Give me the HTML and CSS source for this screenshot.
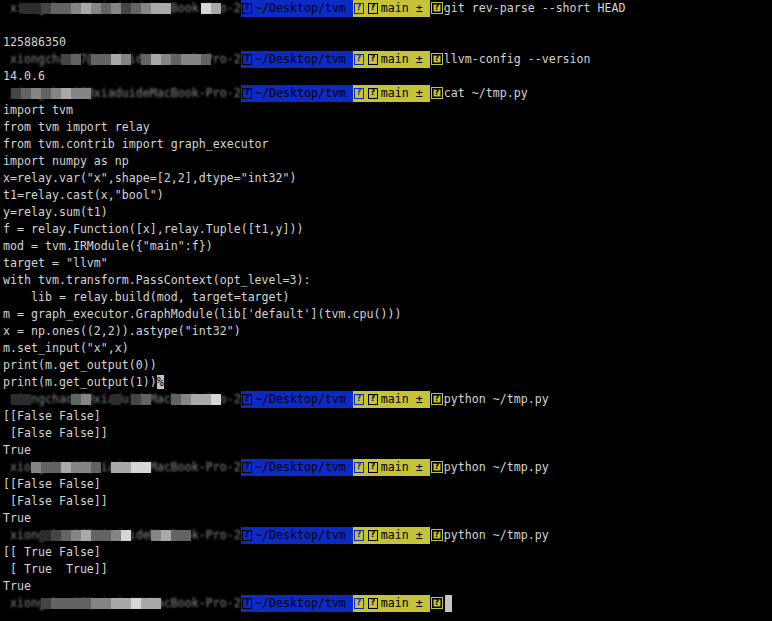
FILE: index.html
```html
<!DOCTYPE html>
<html>
<head>
<meta charset="utf-8">
<link rel="stylesheet" href="styles.css">
</head>
<body>
<div class="term">
  <div class="line"><span class="ctx"><span class="ctx-text"> xiongchao07@xiaduideMacBook-Pro-2</span><span class="m"><i class="s0"></i><i class="s1"></i><i class="s1"></i><i class="s2"></i><i class="s3"></i><i class="s3"></i><i class="s4"></i><i class="s5"></i><i class="s4"></i><i class="s3"></i><i class="s4"></i><i class="s2"></i><i class="s3"></i><i class="s4"></i><i class="s5"></i><i class="s5"></i><i class="s0"></i><i class="s0"></i><i class="s0"></i><i class="s6"></i><i class="s5"></i><i class="s0"></i></span></span><span class="seg dir"><span class="qb"><span class="q">?</span></span>~/Desktop/tvm </span><span class="seg git"><span class="qb qblue"><span class="q">?</span></span><span class="qb"><span class="q">?</span></span>main ± </span><span class="qend"><span class="q">?</span></span><span class="cmd">git rev-parse --short HEAD</span></div>
  <div class="line"></div>
  <div class="line">125886350</div>
  <div class="line"><span class="ctx"><span class="ctx-text"> xiongchao07@xiaduideMacBook-Pro-2</span><span class="m"><i class="s0"></i><i class="s0"></i><i class="s0"></i><i class="s0"></i><i class="s0"></i><i class="s2"></i><i class="s3"></i><i class="s0"></i><i class="s3"></i><i class="s3"></i><i class="s5"></i><i class="s4"></i><i class="s0"></i><i class="s3"></i><i class="s5"></i><i class="s4"></i><i class="s3"></i><i class="s4"></i><i class="s4"></i><i class="s3"></i><i class="s0"></i><i class="s0"></i></span></span><span class="seg dir"><span class="qb"><span class="q">?</span></span>~/Desktop/tvm </span><span class="seg git"><span class="qb qblue"><span class="q">?</span></span><span class="qb"><span class="q">?</span></span>main ± </span><span class="qend"><span class="q">?</span></span><span class="cmd">llvm-config --version</span></div>
  <div class="line">14.0.6</div>
  <div class="line"><span class="ctx"><span class="ctx-text"> xiongchao07@xiaduideMacBook-Pro-2</span><span class="m"><i class="s2"></i><i class="s3"></i><i class="s4"></i><i class="s3"></i><i class="s4"></i><i class="s5"></i><i class="s4"></i><i class="s4"></i><i class="s0"></i><i class="s0"></i><i class="s0"></i><i class="s0"></i><i class="s0"></i><i class="s0"></i><i class="s0"></i><i class="s0"></i><i class="s0"></i><i class="s0"></i><i class="s0"></i><i class="s0"></i><i class="s0"></i><i class="s0"></i></span></span><span class="seg dir"><span class="qb"><span class="q">?</span></span>~/Desktop/tvm </span><span class="seg git"><span class="qb qblue"><span class="q">?</span></span><span class="qb"><span class="q">?</span></span>main ± </span><span class="qend"><span class="q">?</span></span><span class="cmd">cat ~/tmp.py</span></div>
  <div class="line">import tvm</div>
  <div class="line">from tvm import relay</div>
  <div class="line">from tvm.contrib import graph_executor</div>
  <div class="line">import numpy as np</div>
  <div class="line">x=relay.var("x",shape=[2,2],dtype="int32")</div>
  <div class="line">t1=relay.cast(x,"bool")</div>
  <div class="line">y=relay.sum(t1)</div>
  <div class="line">f = relay.Function([x],relay.Tuple([t1,y]))</div>
  <div class="line">mod = tvm.IRModule({"main":f})</div>
  <div class="line">target = "llvm"</div>
  <div class="line">with tvm.transform.PassContext(opt_level=3):</div>
  <div class="line">    lib = relay.build(mod, target=target)</div>
  <div class="line">m = graph_executor.GraphModule(lib['default'](tvm.cpu()))</div>
  <div class="line">x = np.ones((2,2)).astype("int32")</div>
  <div class="line">m.set_input("x",x)</div>
  <div class="line">print(m.get_output(0))</div>
  <div class="line">print(m.get_output(1))<span class="eol">%</span></div>
  <div class="line"><span class="ctx"><span class="ctx-text"> xiongchao07@xiaduideMacBook-Pro-2</span><span class="m"><i class="s1"></i><i class="s1"></i><i class="s0"></i><i class="s0"></i><i class="s0"></i><i class="s0"></i><i class="s3"></i><i class="s4"></i><i class="s0"></i><i class="s0"></i><i class="s1"></i><i class="s0"></i><i class="s2"></i><i class="s3"></i><i class="s0"></i><i class="s0"></i><i class="s3"></i><i class="s4"></i><i class="s5"></i><i class="s5"></i><i class="s6"></i><i class="s0"></i></span></span><span class="seg dir"><span class="qb"><span class="q">?</span></span>~/Desktop/tvm </span><span class="seg git"><span class="qb qblue"><span class="q">?</span></span><span class="qb"><span class="q">?</span></span>main ± </span><span class="qend"><span class="q">?</span></span><span class="cmd">python ~/tmp.py</span></div>
  <div class="line">[[False False]</div>
  <div class="line"> [False False]]</div>
  <div class="line">True</div>
  <div class="line"><span class="ctx"><span class="ctx-text"> xiongchao07@xiaduideMacBook-Pro-2</span><span class="m"><i class="s0"></i><i class="s0"></i><i class="s4"></i><i class="s3"></i><i class="s3"></i><i class="s5"></i><i class="s4"></i><i class="s4"></i><i class="s3"></i><i class="s0"></i><i class="s5"></i><i class="s5"></i><i class="s6"></i><i class="s6"></i><i class="s0"></i><i class="s0"></i><i class="s0"></i><i class="s0"></i><i class="s0"></i><i class="s0"></i><i class="s0"></i><i class="s0"></i></span></span><span class="seg dir"><span class="qb"><span class="q">?</span></span>~/Desktop/tvm </span><span class="seg git"><span class="qb qblue"><span class="q">?</span></span><span class="qb"><span class="q">?</span></span>main ± </span><span class="qend"><span class="q">?</span></span><span class="cmd">python ~/tmp.py</span></div>
  <div class="line">[[False False]</div>
  <div class="line"> [False False]]</div>
  <div class="line">True</div>
  <div class="line"><span class="ctx"><span class="ctx-text"> xiongchao07@xiaduideMacBook-Pro-2</span><span class="m"><i class="s0"></i><i class="s0"></i><i class="s0"></i><i class="s1"></i><i class="s2"></i><i class="s3"></i><i class="s4"></i><i class="s5"></i><i class="s3"></i><i class="s3"></i><i class="s4"></i><i class="s6"></i><i class="s0"></i><i class="s0"></i><i class="s4"></i><i class="s5"></i><i class="s3"></i><i class="s3"></i><i class="s0"></i><i class="s0"></i><i class="s0"></i><i class="s0"></i></span></span><span class="seg dir"><span class="qb"><span class="q">?</span></span>~/Desktop/tvm </span><span class="seg git"><span class="qb qblue"><span class="q">?</span></span><span class="qb"><span class="q">?</span></span>main ± </span><span class="qend"><span class="q">?</span></span><span class="cmd">python ~/tmp.py</span></div>
  <div class="line">[[ True False]</div>
  <div class="line"> [ True  True]]</div>
  <div class="line">True</div>
  <div class="line"><span class="ctx"><span class="ctx-text"> xiongchao07@xiaduideMacBook-Pro-2</span><span class="m"><i class="s0"></i><i class="s0"></i><i class="s0"></i><i class="s2"></i><i class="s3"></i><i class="s3"></i><i class="s3"></i><i class="s3"></i><i class="s4"></i><i class="s4"></i><i class="s5"></i><i class="s5"></i><i class="s6"></i><i class="s5"></i><i class="s5"></i><i class="s0"></i><i class="s0"></i><i class="s0"></i><i class="s0"></i><i class="s0"></i><i class="s0"></i><i class="s0"></i></span></span><span class="seg dir"><span class="qb"><span class="q">?</span></span>~/Desktop/tvm </span><span class="seg git"><span class="qb qblue"><span class="q">?</span></span><span class="qb"><span class="q">?</span></span>main ± </span><span class="qend"><span class="q">?</span></span><span class="cursor"></span></div>
</div>
</body>
</html>
```

FILE: styles.css
```css
html, body {
  margin: 0;
  padding: 0;
  background: #000;
}

.term {
  padding: 0 0 0 3px;
  font-family: "DejaVu Sans Mono", "Liberation Mono", monospace;
  font-size: 11.627px;
  color: #d4d4d4;
  width: 769px;
  height: 621px;
  overflow: hidden;
}

.line {
  height: 17px;
  line-height: 17px;
  white-space: pre;
}

.ctx {
  display: inline-block;
  vertical-align: top;
  width: 238px;
  height: 17px;
  position: relative;
  overflow: hidden;
}

.ctx-text {
  color: #8a8a8a;
  filter: blur(1px);
}

.m {
  position: absolute;
  left: 8px;
  top: 3px;
  display: flex;
  filter: blur(0.4px);
}

.m i {
  display: block;
  width: 10px;
  height: 11px;
  flex: none;
}

.m .s0 { background: transparent; }
.m .s1 { background: #2c2c2c; }
.m .s2 { background: #454545; }
.m .s3 { background: #636363; }
.m .s4 { background: #858585; }
.m .s5 { background: #a9a9a9; }
.m .s6 { background: #d6d6d6; }

.seg {
  display: inline-block;
  vertical-align: top;
  height: 17px;
  color: #000;
}

.dir {
  background: #0c2bc6;
}

.git {
  background: #c6c33b;
}

.qb {
  display: inline-block;
  vertical-align: top;
  width: 14px;
  height: 17px;
}

.q {
  display: block;
  box-sizing: border-box;
  width: 10px;
  height: 11px;
  margin: 3px 0 0 1px;
  border: 1.5px solid currentColor;
  font-family: "DejaVu Sans", sans-serif;
  font-weight: bold;
  font-size: 8px;
  line-height: 8px;
  text-align: center;
}

.qblue {
  color: #0c2bc6;
}

.qend {
  display: inline-block;
  vertical-align: top;
  width: 14px;
  height: 17px;
  color: #000;
}

.qend .q {
  width: 12px;
  height: 12px;
  margin: 2px 0 0 1px;
  background: #c6c33b;
  border: 1px solid #c6c33b;
  box-shadow: inset 0 0 0 1.5px #000;
  line-height: 10px;
}

.cmd {
  color: #d4d4d4;
}

.eol {
  background: #c4c4c4;
  color: #000;
}

.cursor {
  display: inline-block;
  vertical-align: top;
  width: 7px;
  height: 17px;
  margin-left: 1px;
  background: #c4c4c4;
}
```
